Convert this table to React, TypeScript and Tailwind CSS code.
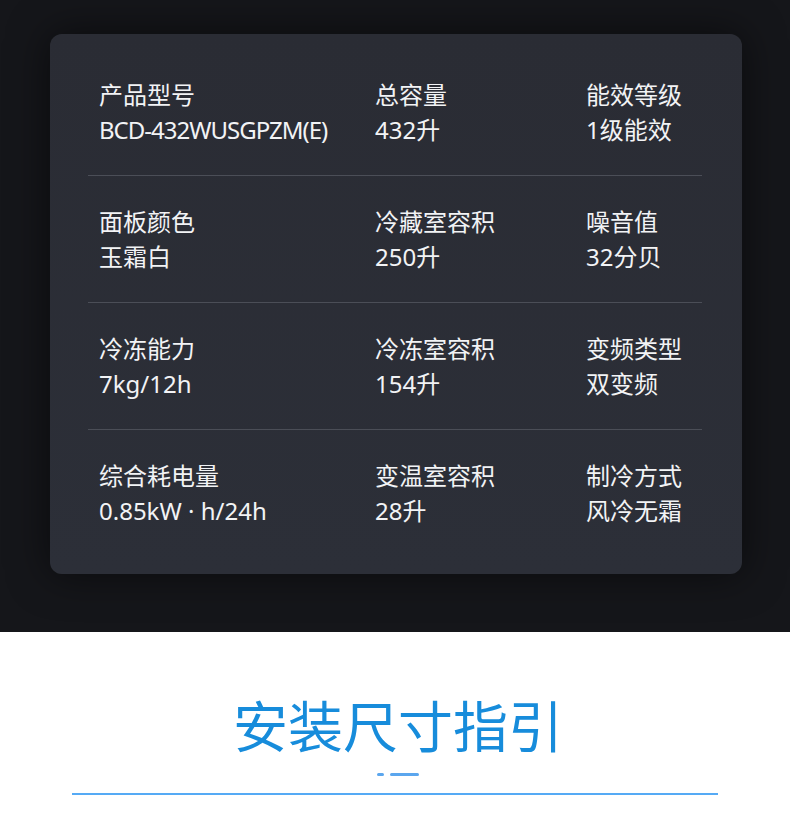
const specs = [
  [
    { label: "产品型号", value: "BCD-432WUSGPZM(E)", narrow: true },
    { label: "总容量", value: "432升" },
    { label: "能效等级", value: "1级能效" },
  ],
  [
    { label: "面板颜色", value: "玉霜白" },
    { label: "冷藏室容积", value: "250升" },
    { label: "噪音值", value: "32分贝" },
  ],
  [
    { label: "冷冻能力", value: "7kg/12h" },
    { label: "冷冻室容积", value: "154升" },
    { label: "变频类型", value: "双变频" },
  ],
  [
    { label: "综合耗电量", value: "0.85kW · h/24h" },
    { label: "变温室容积", value: "28升" },
    { label: "制冷方式", value: "风冷无霜" },
  ],
];

const font = { fontFamily: '"Noto Sans", "Noto Sans CJK SC", sans-serif' };

export default function App() {
  return (
    <div className="w-[790px] h-[820px] bg-white" style={font}>
      <div className="h-[632px] bg-[#15161a] pt-[34px] px-[48px]">
        <div className="w-[692px] ml-[2px] h-[540px] rounded-[12px] bg-gradient-to-b from-[#2a2c34] to-[#2c2f38] shadow-[0_0_40px_rgba(0,0,0,0.55)] pl-[38px] pr-[40px] pt-[15px]">
          {specs.map((row, i) => (
            <div key={i}>
              <div className="grid grid-cols-[276px_211px_1fr] px-[11px] py-[28px]">
                {row.map((c) => (
                  <div key={c.label}>
                    <div className="text-[24px] leading-[35px] text-[#f2f3f5]">{c.label}</div>
                    <div
                      className={
                        c.narrow
                          ? "text-[24px] leading-[35px] tracking-[-1px] text-[#f2f3f5]"
                          : "text-[24px] leading-[35px] text-[#f2f3f5]"
                      }
                    >
                      {c.value}
                    </div>
                  </div>
                ))}
              </div>
              {i < specs.length - 1 && <div className="h-px bg-[#4b4e57]" />}
            </div>
          ))}
        </div>
      </div>
      <div className="flex flex-col items-center pt-[61px]">
        <div className="text-[55px] leading-[66px] text-[#178cdb] pl-[6px]">安装尺寸指引</div>
        <div className="flex items-center gap-[6px] mt-[14px] ml-[6px]">
          <div className="w-[7px] h-[3px] rounded-full bg-[#5ba6ee]" />
          <div className="w-[29px] h-[3px] rounded-full bg-[#5ba6ee]" />
        </div>
      </div>
      <div className="mx-[72px] mt-[17px] h-[2px] bg-[#55aaf5]" />
    </div>
  );
}
